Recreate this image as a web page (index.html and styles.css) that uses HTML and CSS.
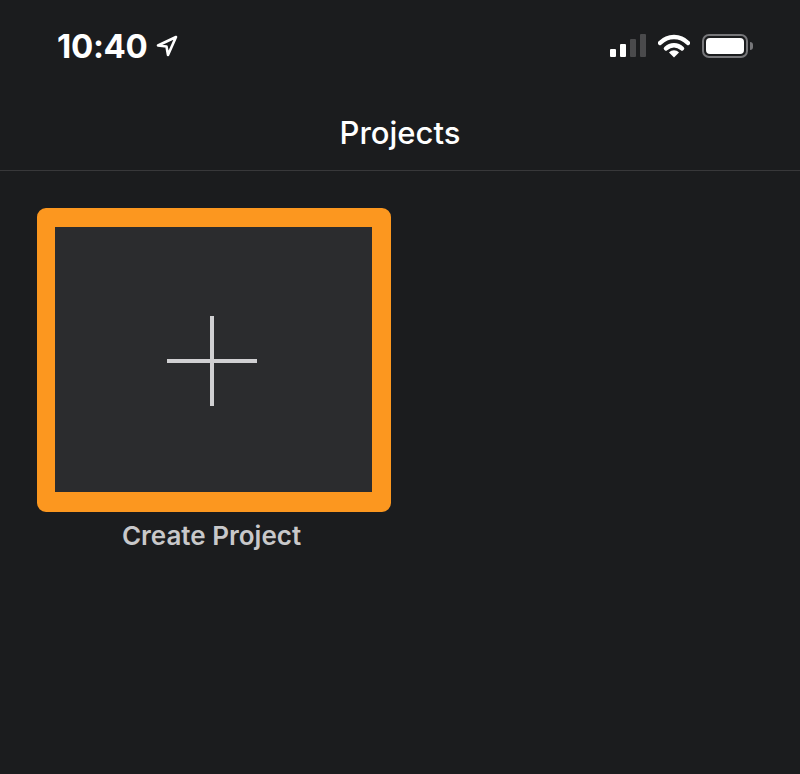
FILE: index.html
```html
<!DOCTYPE html>
<html lang="en">

<head>
    <meta charset="UTF-8">
    <meta name="viewport" content="width=device-width, initial-scale=1.0">
    <title>Projects</title>
    <link rel="stylesheet" href="styles.css">
</head>

<body>

    <div class="statusBar">
        <div class="statusLeft">
            <span class="time">10:40</span>
            <svg class="locationIcon" width="22" height="22" viewBox="0 0 22 22">
                <path d="M20 2 L2 10.5 L10.5 11.5 L12 20 Z" fill="none" stroke="#fff" stroke-width="2.6" stroke-linejoin="round" />
            </svg>
        </div>
        <div class="statusRight">
            <svg width="36" height="24" viewBox="0 0 36 24">
                <rect x="0" y="15" width="6" height="8" rx="1" fill="#fff" />
                <rect x="10" y="10" width="6" height="13" rx="1" fill="#fff" />
                <rect x="20" y="5" width="6" height="18" rx="1" fill="#4a4a4c" />
                <rect x="30" y="0" width="6" height="23" rx="1" fill="#4a4a4c" />
            </svg>
            <svg class="wifiIcon" width="32" height="24" viewBox="0 0 32 24">
                <path d="M2 9 C10 1 22 1 30 9" fill="none" stroke="#fff" stroke-width="4.5" stroke-linecap="round" />
                <path d="M8 14.5 C12.5 10 19.5 10 24 14.5" fill="none" stroke="#fff" stroke-width="4.5" stroke-linecap="round" />
                <path d="M11 18.5 C14 15.5 18 15.5 21 18.5 L16 23.5 Z" fill="#fff" />
            </svg>
            <div class="battery">
                <div class="batteryFill"></div>
            </div>
            <div class="batteryNub"></div>
        </div>
    </div>

    <div class="navBar">
        <h1>Projects</h1>
    </div>

    <div class="projects">
        <div class="project">
            <div class="thumb">
                <svg width="90" height="90" viewBox="0 0 90 90">
                    <rect x="0" y="43" width="90" height="4" fill="#d0d0d2" />
                    <rect x="43" y="0" width="4" height="90" fill="#d0d0d2" />
                </svg>
            </div>
            <p class="projectName">Create Project</p>
        </div>
    </div>

</body>

</html>
```

FILE: styles.css
```css
body {
    margin: 0;
    background: #1b1c1e;
    font-family: Inter, "Liberation Sans", sans-serif;
    color: white;
}

.statusBar {
    display: flex;
    justify-content: space-between;
    align-items: center;
    height: 92px;
    padding: 0 47px 0 57px;
    box-sizing: border-box;
}

.statusLeft,
.statusRight {
    display: flex;
    align-items: center;
}

.time {
    font-size: 33px;
    font-weight: 700;
    letter-spacing: -0.3px;
}

.locationIcon {
    margin-left: 8px;
}

.wifiIcon {
    margin-left: 12px;
}

.battery {
    width: 46px;
    height: 24px;
    margin-left: 12px;
    padding: 2px;
    box-sizing: border-box;
    border: 2.5px solid #77777a;
    border-radius: 7px;
}

.batteryFill {
    height: 100%;
    background: white;
    border-radius: 4px;
}

.batteryNub {
    width: 3px;
    height: 8px;
    margin-left: 2px;
    background: #77777a;
    border-radius: 0 3px 3px 0;
}

.navBar {
    height: 79px;
    border-bottom: 1px solid #38383a;
    box-sizing: border-box;
    display: flex;
    justify-content: center;
    padding-top: 16px;
}

h1 {
    margin: 0;
    font-size: 31px;
    font-weight: 500;
    line-height: 50px;
}

.projects {
    padding: 37px 0 0 37px;
}

.project {
    width: 354px;
}

.thumb {
    display: flex;
    align-items: center;
    justify-content: center;
    height: 304px;
    padding: 2px 3px 0 0;
    box-sizing: border-box;
    background: #2b2c2e;
    border-style: solid;
    border-color: #fc971f;
    border-width: 19px 19px 20px 18px;
    border-radius: 9px;
}

.projectName {
    margin: 8px 0 0;
    padding-right: 5px;
    text-align: center;
    font-size: 26px;
    font-weight: 600;
    line-height: 32px;
    color: #c8c8ca;
}
```
